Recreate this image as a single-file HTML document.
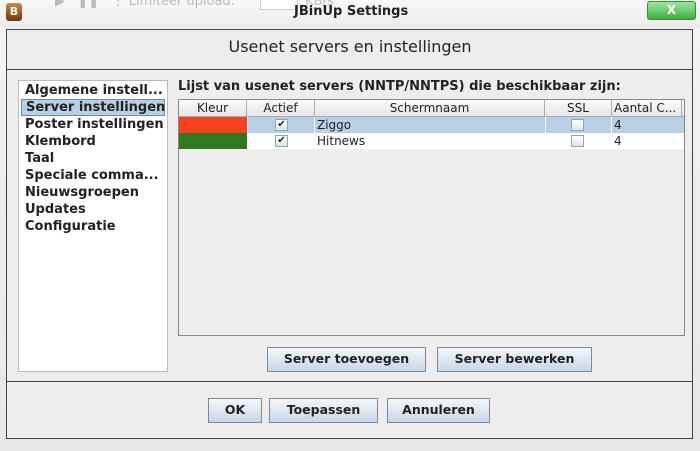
<!DOCTYPE html><html><head><style>
*{box-sizing:border-box;margin:0;padding:0}
body{width:700px;height:451px;overflow:hidden;background:linear-gradient(#f4f4f4,#e6e6e6);font-family:"DejaVu Sans","Liberation Sans",sans-serif;position:relative;font-size:12px;color:#222}
.a{position:absolute;white-space:nowrap}
.btn{position:absolute;border:1px solid #7a8a99;background:linear-gradient(#f2f6fa,#c9d7e5);font-weight:bold;font-size:12.5px;text-align:center;line-height:22px;color:#222;white-space:nowrap}
.li{height:17px;line-height:17px;padding-left:6px;font-weight:bold;font-size:13px;white-space:nowrap;overflow:hidden}
.cb{position:absolute;width:13px;height:12px;border:1px solid #8aa;background:linear-gradient(#fff,#dde5ee);font-size:10px;line-height:10px;text-align:center}
.th{position:absolute;top:0;height:17px;border-right:1px solid #aab;text-align:center;line-height:16px;font-size:12px;white-space:nowrap}
</style></head><body>
<div class="a" style="left:0;top:0;width:700px;height:28px;background:linear-gradient(#f8f8f8,#ececec)"></div>
<div class="a" style="left:55px;top:-6px;color:#bbb;font-size:13px">▶ &nbsp; ❚❚ &nbsp; ⋮ Limiteer upload:</div>
<div class="a" style="left:260px;top:-4px;width:38px;height:14px;border:1px solid #ccc;background:#fff"></div>
<div class="a" style="left:305px;top:-6px;color:#bbb;font-size:13px">KB/s</div>
<div class="a" style="left:6px;top:3px;width:16px;height:18px;border-radius:3px;background:linear-gradient(#c98a45,#6b3a12);color:#fff;font-weight:bold;font-size:11px;text-align:center;line-height:18px">B</div>
<div class="a" style="left:294px;top:4px;font-weight:bold;font-size:13px">JBinUp Settings</div>
<div class="a" style="left:647px;top:1px;width:49px;height:19px;border:1px solid #3a8a3a;border-radius:3px;background:linear-gradient(#9fe59f,#3fae3f);color:#fff;font-weight:bold;text-align:center;line-height:17px">X</div>
<div class="a" style="left:6px;top:29px;width:687px;height:410px;border:1px solid #444;background:#ededed"></div>
<div class="a" style="left:6px;top:69px;width:687px;height:1px;background:#444"></div>
<div class="a" style="left:6px;top:381px;width:687px;height:1px;background:#444"></div>
<div class="a" style="left:0;top:37px;width:700px;text-align:center;font-size:16px;color:#222">Usenet servers en instellingen</div>
<div class="a" style="left:18px;top:80px;width:150px;height:292px;background:#fff;border:1px solid #bbb;padding-top:1px">
<div class="li">Algemene instell...</div>
<div class="li" style="background:#b8cfe5;border:1px solid #6a8ab0;margin:0 2px;padding-left:4px;height:17px;line-height:15px">Server instellingen</div>
<div class="li">Poster instellingen</div>
<div class="li">Klembord</div>
<div class="li">Taal</div>
<div class="li">Speciale comma...</div>
<div class="li">Nieuwsgroepen</div>
<div class="li">Updates</div>
<div class="li">Configuratie</div>
</div>
<div class="a" style="left:178px;top:79px;font-weight:bold;font-size:13px">Lijst van usenet servers (NNTP/NNTPS) die beschikbaar zijn:</div>
<div class="a" style="left:178px;top:99px;width:507px;height:237px;border:1px solid #888;background:#ededed">
<div class="a" style="left:0;top:0;width:505px;height:17px;background:linear-gradient(#fafafa,#e6e6e6);border-bottom:1px solid #aab"></div>
<div class="th" style="left:0;width:68px">Kleur</div>
<div class="th" style="left:68px;width:68px">Actief</div>
<div class="th" style="left:136px;width:230px">Schermnaam</div>
<div class="th" style="left:366px;width:67px">SSL</div>
<div class="th" style="left:433px;width:70px;text-align:left;padding-left:2px">Aantal C...</div>
<div class="a" style="left:0;top:17px;width:505px;height:16px;background:#b8cfe5"></div>
<div class="a" style="left:0;top:33px;width:505px;height:16px;background:#fff"></div>
<div class="a" style="left:0;top:17px;width:68px;height:16px;background:#f5421e"></div>
<div class="a" style="left:0;top:33px;width:68px;height:16px;background:#327721"></div>
<div class="a" style="left:68px;top:17px;width:1px;height:32px;background:#fff"></div>
<div class="a" style="left:366px;top:17px;width:1px;height:32px;background:#fff"></div>
<div class="a" style="left:135px;top:17px;width:1px;height:32px;background:#fff"></div>
<div class="a" style="left:432px;top:17px;width:1px;height:32px;background:#fff"></div>
<div class="cb" style="left:96px;top:19px">✔</div>
<div class="cb" style="left:96px;top:35px">✔</div>
<div class="cb" style="left:392px;top:19px"></div>
<div class="cb" style="left:392px;top:35px"></div>
<div class="a" style="left:138px;top:17px;line-height:16px">Ziggo</div>
<div class="a" style="left:138px;top:33px;line-height:16px">Hitnews</div>
<div class="a" style="left:435px;top:17px;line-height:16px">4</div>
<div class="a" style="left:435px;top:33px;line-height:16px">4</div>
</div>
<div class="btn" style="left:267px;top:347px;width:159px;height:25px">Server toevoegen</div>
<div class="btn" style="left:437px;top:347px;width:155px;height:25px">Server bewerken</div>
<div class="btn" style="left:208px;top:398px;width:54px;height:25px">OK</div>
<div class="btn" style="left:269px;top:398px;width:109px;height:25px">Toepassen</div>
<div class="btn" style="left:387px;top:398px;width:103px;height:25px">Annuleren</div>
</body></html>
